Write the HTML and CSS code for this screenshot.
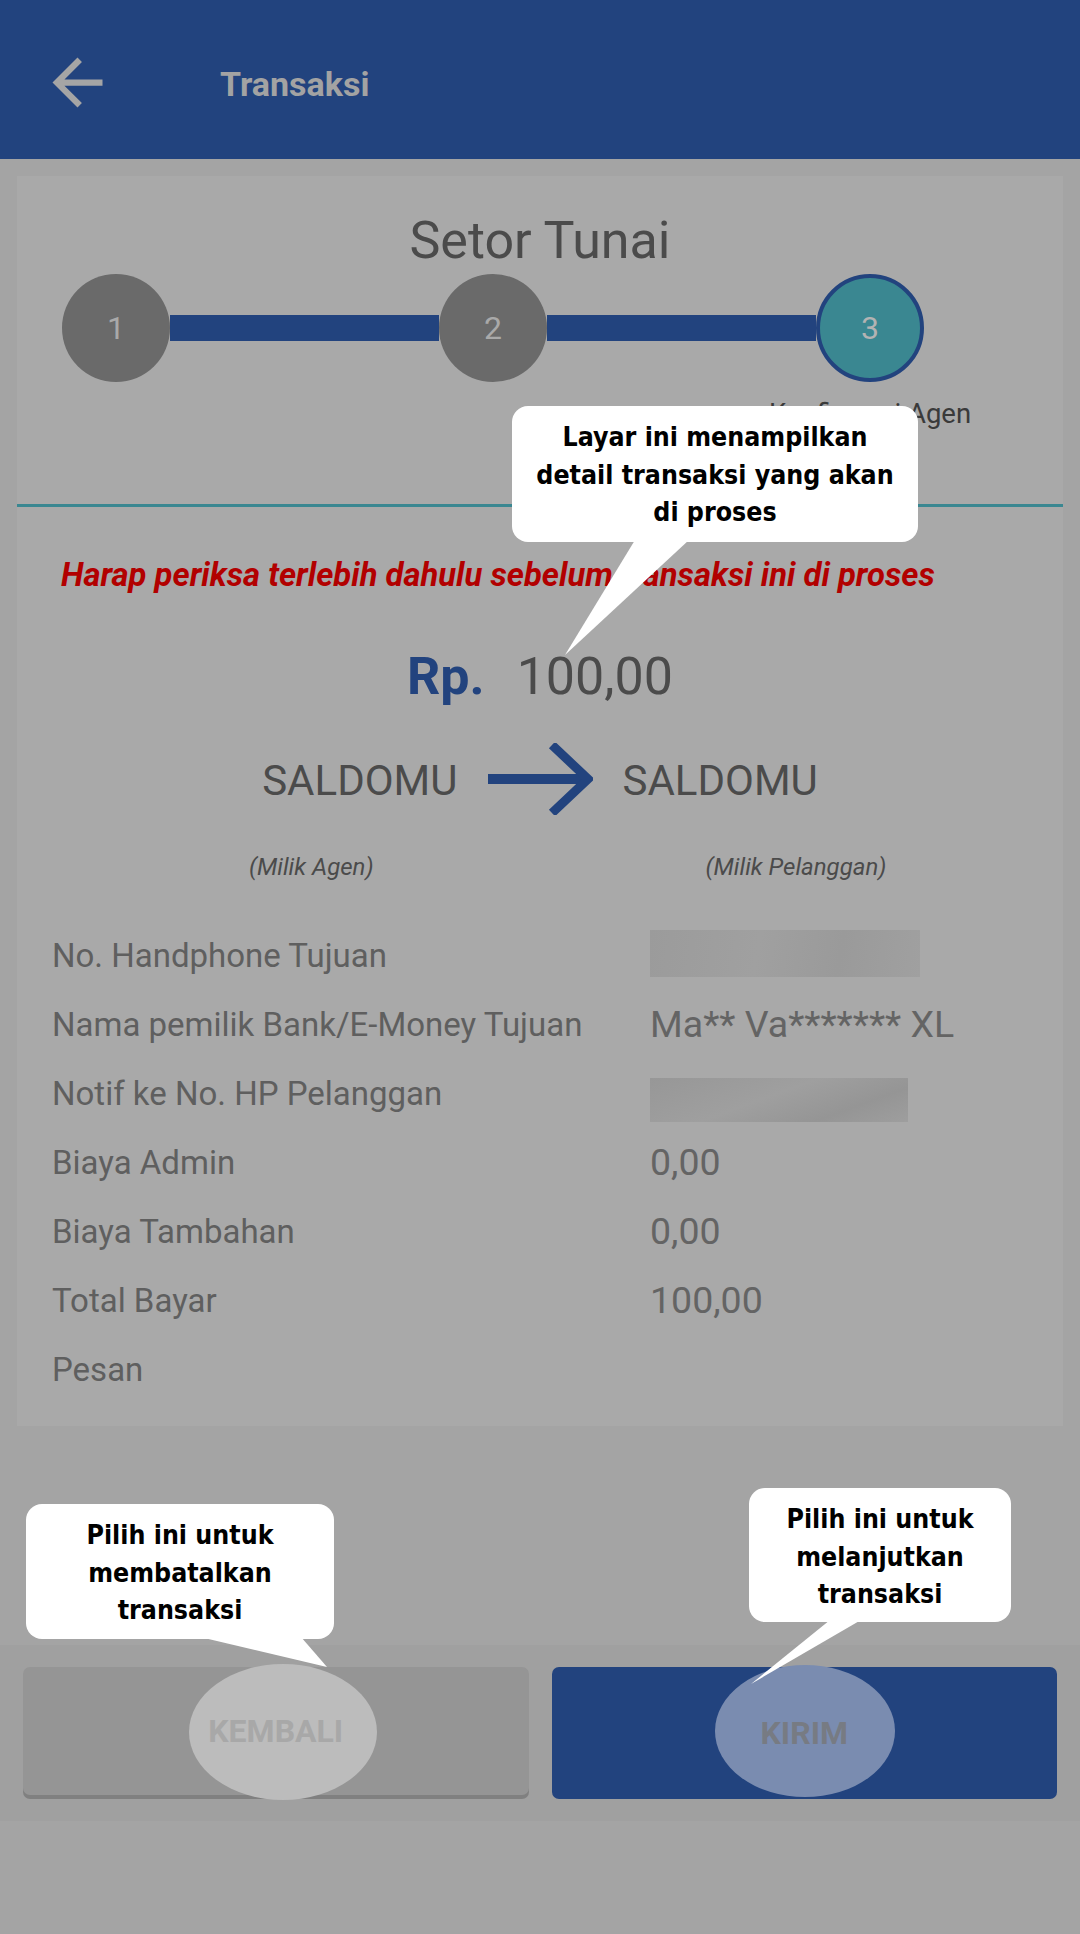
FILE: index.html
```html
<!DOCTYPE html>
<html lang="id">
<head>
<meta charset="utf-8">
<title>Transaksi</title>
<link rel="stylesheet" href="styles.css">
</head>
<body>
<div class="page">
  <header class="appbar">
    <svg class="back" viewBox="0 0 24 24" width="75" height="75"><path d="M20 11H7.83l5.59-5.59L12 4l-8 8 8 8 1.41-1.41L7.83 13H20v-2z" fill="#a5a5a5"/></svg>
    <h1 class="appbar-title">Transaksi</h1>
  </header>

  <main class="content">
    <section class="card">
      <h2 class="card-title">Setor Tunai</h2>
      <div class="stepper">
        <div class="step">1</div>
        <div class="step-line"></div>
        <div class="step">2</div>
        <div class="step-line"></div>
        <div class="step step-active">3</div>
        <div class="step-label">Konfirmasi Agen</div>
      </div>
      <div class="divider"></div>
      <p class="warning">Harap periksa terlebih dahulu sebelum transaksi ini di proses</p>
      <div class="amount"><span class="amount-cur">Rp.</span><span class="amount-val">100,00</span></div>
      <div class="flow">
        <span class="flow-name">SALDOMU</span>
        <svg class="flow-arrow" viewBox="0 0 105 72" width="105" height="72"><path d="M0 36H98" stroke="#22437e" stroke-width="10" fill="none"/><path d="M64 2L100 36L64 70" stroke="#22437e" stroke-width="9" fill="none" stroke-linejoin="miter"/></svg>
        <span class="flow-name">SALDOMU</span>
      </div>
      <div class="owners">
        <span class="owner owner-left">(Milik Agen)</span>
        <span class="owner owner-right">(Milik Pelanggan)</span>
      </div>
      <dl class="details">
        <div class="row"><dt>No. Handphone Tujuan</dt><dd><div class="blur blur-1"></div></dd></div>
        <div class="row"><dt>Nama pemilik Bank/E-Money Tujuan</dt><dd>Ma** Va******* XL</dd></div>
        <div class="row"><dt>Notif ke No. HP Pelanggan</dt><dd><div class="blur blur-2"></div></dd></div>
        <div class="row"><dt>Biaya Admin</dt><dd>0,00</dd></div>
        <div class="row"><dt>Biaya Tambahan</dt><dd>0,00</dd></div>
        <div class="row"><dt>Total Bayar</dt><dd>100,00</dd></div>
        <div class="row"><dt>Pesan</dt><dd></dd></div>
      </dl>
    </section>
  </main>

  <footer class="actions">
    <button class="btn btn-back"><span class="spot spot-back"></span><span class="btn-text">KEMBALI</span></button>
    <button class="btn btn-send"><span class="spot spot-send"></span><span class="btn-text">KIRIM</span></button>
  </footer>

  <svg class="tails" viewBox="0 0 1080 1934" width="1080" height="1934">
    <polygon points="635,540 689,540 565,655" fill="#fff"/>
    <polygon points="200,1637 301,1637 327,1667" fill="#fff"/>
    <polygon points="830,1620 861,1620 751,1684" fill="#fff"/>
  </svg>
  <div class="tip tip-detail">Layar ini menampilkan<br>detail transaksi yang akan<br>di proses</div>
  <div class="tip tip-back">Pilih ini untuk<br>membatalkan<br>transaksi</div>
  <div class="tip tip-send">Pilih ini untuk<br>melanjutkan<br>transaksi</div>
</div>
</body>
</html>
```

FILE: styles.css
```css
* { box-sizing: border-box; }
html, body { margin: 0; padding: 0; }
body { background: #a4a4a4; font-family: Roboto, "Liberation Sans", sans-serif; }
.page { position: relative; width: 1080px; height: 1934px; overflow: hidden; background: #a4a4a4; }

.appbar { height: 159px; background: #22437e; display: flex; align-items: flex-start; }
.back { display: block; margin: 45px 0 0 40px; flex: none; }
.appbar-title { margin: 64px 0 0 105px; font-size: 34px; line-height: 40px; font-weight: 700; color: #a3a3a3; }

.content { padding: 17px 17px 0; }
.card { background: #a9a9a9; padding-bottom: 22px; }
.card-title { margin: 0; padding-top: 35px; text-align: center; font-size: 52px; line-height: 60px; font-weight: 400; color: #4b4b4b; }

.stepper { display: grid; grid-template-columns: 108px 269px 108px 269px 108px; grid-template-rows: 108px auto; margin: 3px 0 0 45px; align-items: center; }
.step { width: 108px; height: 108px; border-radius: 50%; background: #6a6a6a; color: #a9a9a9; font-size: 32px; display: flex; align-items: center; justify-content: center; }
.step-active { background: #3a8791; border: 4px solid #22437e; color: #b3b3b3; }
.step-line { height: 26px; background: #22437e; }
.step-label { grid-column: 5; grid-row: 2; margin: 17px -100px 0; text-align: center; font-size: 27.5px; line-height: 30px; color: #3a3a3a; white-space: nowrap; }

.divider { height: 3px; background: #3a8791; margin-top: 75px; }
.warning { margin: 49px 0 0; padding-left: 44px; font-size: 32.8px; line-height: 38px; font-weight: 700; font-style: italic; color: #b20000; white-space: nowrap; }

.amount { margin-top: 53px; display: flex; justify-content: center; font-size: 52px; line-height: 60px; }
.amount-cur { font-weight: 700; color: #22437e; }
.amount-val { margin-left: 32px; color: #4b4b4b; }

.flow { margin-top: 36px; height: 72px; display: flex; justify-content: center; align-items: center; gap: 30px; }
.flow-name { font-size: 42px; line-height: 48px; color: #4b4b4b; margin-top: 4px; }
.flow-arrow { display: block; }

.owners { margin-top: 39px; display: flex; font-size: 24px; line-height: 26px; font-style: italic; color: #4b4b4b; }
.owner-left { margin-left: 232px; }
.owner-right { margin-left: 332px; }

.details { margin: 41px 0 0; padding-left: 35px; }
.row { display: flex; height: 69px; align-items: flex-start; }
.row dt { width: 598px; flex: none; color: #5f5f5f; font-size: 33px; line-height: 69px; }
.row dd { margin: 0; color: #646464; font-size: 37.5px; line-height: 69px; }
.blur { background: linear-gradient(100deg, #9b9b9b 0%, #a0a0a0 40%, #9a9a9a 70%, #a0a0a0 100%); }
.blur-1 { width: 270px; height: 47px; margin-top: 9px; }
.blur-2 { width: 258px; height: 44px; margin-top: 19px; background: linear-gradient(160deg, #979797 0%, #9f9f9f 45%, #959595 75%, #9e9e9e 100%); }

.actions { margin-top: 219px; background: #a0a0a0; padding: 22px 23px; display: flex; gap: 23px; }
.btn { position: relative; flex: 1; height: 132px; border: 0; border-radius: 7px; font-family: Roboto, "Liberation Sans", sans-serif; font-size: 32px; font-weight: 700; display: flex; align-items: center; justify-content: center; padding: 0; }
.btn-back { background: #959595; height: 128px; margin-bottom: 4px; box-shadow: 0 4px 0 #808080; color: #a8a8a8; }
.btn-send { background: #22437e; color: #777b83; }
.btn-text { position: relative; z-index: 1; }
.spot { position: absolute; border-radius: 50%; }
.spot-back { left: 166px; top: -3px; width: 188px; height: 136px; background: #bcbcbc; }
.spot-send { left: 163px; top: -2px; width: 180px; height: 132px; background: #7a8cb0; }

.tails { position: absolute; left: 0; top: 0; pointer-events: none; }
.tip { position: absolute; background: #fff; border-radius: 16px; text-align: center; color: #000; font-family: "DejaVu Sans Condensed", "DejaVu Sans", sans-serif; font-stretch: condensed; font-weight: 700; font-size: 26.5px; line-height: 37.5px; }
.tip-detail { left: 512px; top: 406px; width: 406px; height: 136px; padding-top: 12px; }
.tip-back { left: 26px; top: 1504px; width: 308px; height: 135px; padding-top: 12px; }
.tip-send { left: 749px; top: 1488px; width: 262px; height: 134px; padding-top: 12px; }
```
